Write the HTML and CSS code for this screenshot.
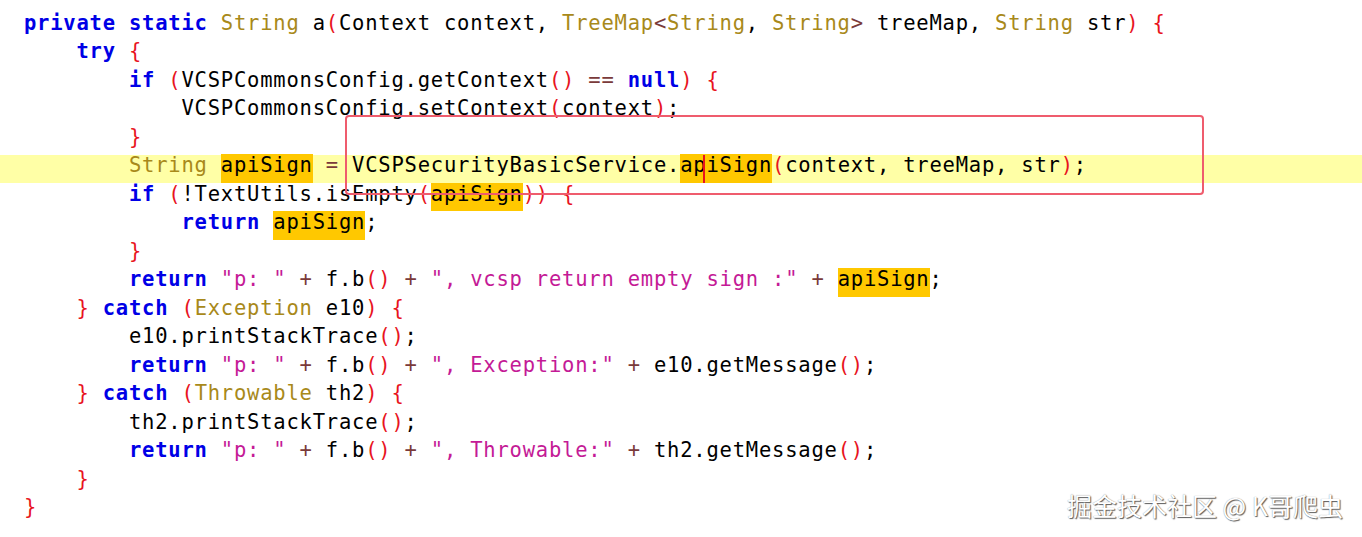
FILE: index.html
```html
<!DOCTYPE html>
<html>
<head>
<meta charset="utf-8">
<link rel="stylesheet" href="styles.css">
</head>
<body>
<div class="editor">
  <div class="code">
<div class="line"><span class="kw">private</span> <span class="kw">static</span> <span class="ty">String</span> a<span class="br">(</span>Context context, <span class="ty">TreeMap</span><span class="op">&lt;</span><span class="ty">String</span>, <span class="ty">String</span><span class="op">&gt;</span> treeMap, <span class="ty">String</span> str<span class="br">)</span> <span class="br">{</span></div>
<div class="line">    <span class="kw">try</span> <span class="br">{</span></div>
<div class="line">        <span class="kw">if</span> <span class="br">(</span>VCSPCommonsConfig.getContext<span class="br">()</span> <span class="op">==</span> <span class="kw">null</span><span class="br">)</span> <span class="br">{</span></div>
<div class="line">            VCSPCommonsConfig.setContext<span class="br">(</span>context<span class="br">)</span>;</div>
<div class="line">        <span class="br">}</span></div>
<div class="line current">        <span class="ty">String</span> <span class="hl">apiSign</span> <span class="op">=</span> VCSPSecurityBasicService.<span class="hl">ap<span class="caret"></span>iSign</span><span class="br">(</span>context, treeMap, str<span class="br">)</span>;</div>
<div class="line">        <span class="kw">if</span> <span class="br">(</span>!TextUtils.isEmpty<span class="br">(</span><span class="hl">apiSign</span><span class="br">))</span> <span class="br">{</span></div>
<div class="line">            <span class="kw">return</span> <span class="hl">apiSign</span>;</div>
<div class="line">        <span class="br">}</span></div>
<div class="line">        <span class="kw">return</span> <span class="st">"p: "</span> <span class="op">+</span> f.b<span class="br">()</span> <span class="op">+</span> <span class="st">", vcsp return empty sign :"</span> <span class="op">+</span> <span class="hl">apiSign</span>;</div>
<div class="line">    <span class="br">}</span> <span class="kw">catch</span> <span class="br">(</span><span class="ty">Exception</span> e10<span class="br">)</span> <span class="br">{</span></div>
<div class="line">        e10.printStackTrace<span class="br">()</span>;</div>
<div class="line">        <span class="kw">return</span> <span class="st">"p: "</span> <span class="op">+</span> f.b<span class="br">()</span> <span class="op">+</span> <span class="st">", Exception:"</span> <span class="op">+</span> e10.getMessage<span class="br">()</span>;</div>
<div class="line">    <span class="br">}</span> <span class="kw">catch</span> <span class="br">(</span><span class="ty">Throwable</span> th2<span class="br">)</span> <span class="br">{</span></div>
<div class="line">        th2.printStackTrace<span class="br">()</span>;</div>
<div class="line">        <span class="kw">return</span> <span class="st">"p: "</span> <span class="op">+</span> f.b<span class="br">()</span> <span class="op">+</span> <span class="st">", Throwable:"</span> <span class="op">+</span> th2.getMessage<span class="br">()</span>;</div>
<div class="line">    <span class="br">}</span></div>
<div class="line"><span class="br">}</span></div>
  </div>
  <div class="annotation"></div>
  <div class="watermark">掘金技术社区 @ K哥爬虫</div>
</div>
</body>
</html>
```

FILE: styles.css
```css
html, body {
  margin: 0;
  padding: 0;
  background: #ffffff;
}

.editor {
  position: relative;
  z-index: 0;
  width: 1362px;
  height: 537px;
  overflow: hidden;
  background: #ffffff;
}

.code {
  display: flex;
  flex-direction: column;
  padding-top: 8.85px;
  font-family: "DejaVu Sans Mono", "Liberation Mono", monospace;
  font-size: 20.5px;
  letter-spacing: 0.78px;
  color: #000000;
}

.line {
  position: relative;
  height: 28.5px;
  line-height: 28.5px;
  padding-left: 24px;
  white-space: pre;
}

.line.current::before {
  content: "";
  position: absolute;
  left: 0;
  right: 0;
  top: 3.65px;
  height: 28px;
  background: #ffffa6;
  z-index: -1;
}

.kw {
  color: #0000e6;
  font-weight: bold;
}

.ty {
  color: #a8891a;
}

.br {
  color: #e8141e;
}

.op {
  color: #7a3a3a;
}

.st {
  color: #c41a96;
}

.hl {
  position: relative;
  background: linear-gradient(to bottom, transparent 1.33px, #ffc800 1.33px);
  padding-bottom: 5.5px;
}

.caret {
  position: absolute;
  top: 1.33px;
  bottom: 0;
  width: 2px;
  margin-left: -3px;
  background: #e8141e;
}

.annotation {
  position: absolute;
  left: 345px;
  top: 115px;
  width: 855px;
  height: 76px;
  border: 2.5px solid #ef5c6d;
  border-radius: 4px;
}

.watermark {
  position: absolute;
  left: 1067px;
  top: 489px;
  font-family: "Noto Sans CJK SC", "Noto Sans", sans-serif;
  font-size: 25px;
  line-height: 32px;
  color: #ffffff;
  text-shadow: 1px 1px 1px #5a5a5a, 0 0 1px #8a8a8a;
  white-space: nowrap;
}
```
